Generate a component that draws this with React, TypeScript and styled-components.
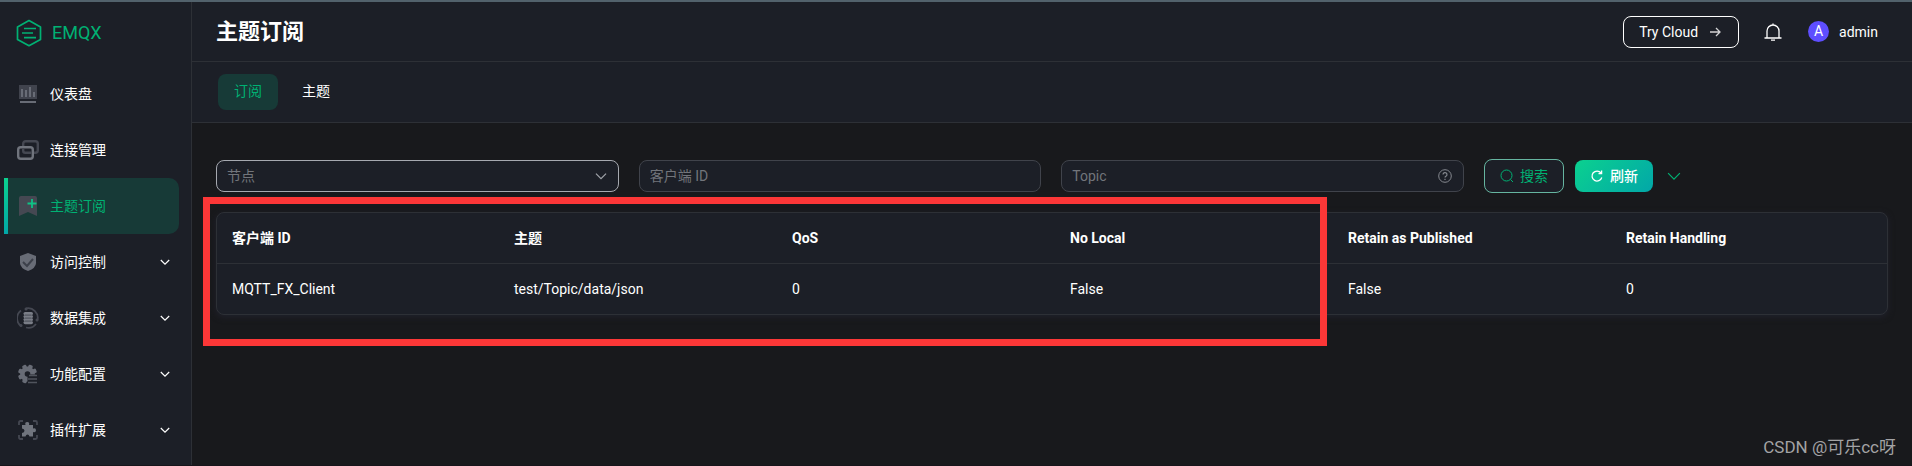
import React from 'react';
import styled, { createGlobalStyle, css } from 'styled-components';

const GlobalStyle = createGlobalStyle`
  *, *::before, *::after { box-sizing: border-box; }
  body {
    margin: 0;
    background: #18191c;
    color: #fff;
    font-family: Roboto, "Noto Sans CJK SC", sans-serif;
    font-size: 14px;
    line-height: 20px;
  }
  button, input, select { font: inherit; color: inherit; margin: 0; }
  a { color: inherit; text-decoration: none; }
`;

const Page = styled.div`
  display: flex;
  position: relative;
  min-height: 100vh;
  border-top: 2px solid #52626c;
  border-bottom: 1px solid #17151b;
`;

const Sidebar = styled.aside`
  flex: 0 0 192px;
  background: #1c1f27;
  border-right: 1px solid #2d3036;
`;

const Brand = styled.a`
  display: flex;
  align-items: center;
  gap: 10px;
  height: 61px;
  padding-left: 16px;
  color: #00b173;
  font-size: 18px;
  font-weight: 400;
`;

const Menu = styled.nav`
  display: flex;
  flex-direction: column;
  padding: 3px 12px 0 4px;
`;

const MenuItem = styled.a<{ $active?: boolean }>`
  display: flex;
  align-items: center;
  gap: 11px;
  height: 56px;
  padding: 0 9px 0 13px;
  border-radius: 0 10px 10px 0;
  ${(p) =>
    p.$active &&
    css`
      color: #00b173;
      background: linear-gradient(#0bd18f, #02a7a8) 0 0 / 4px 100% no-repeat, #173a37;
    `}
`;

const MenuLabel = styled.span`
  flex: 1;
`;

const Main = styled.main`
  flex: 1;
  min-width: 0;
`;

const Header = styled.header`
  display: flex;
  align-items: center;
  height: 60px;
  padding: 0 34px 0 24px;
  background: #1c1f27;
  border-bottom: 1px solid #2d3036;
`;

const Title = styled.h1`
  flex: 1;
  margin: 0;
  font-size: 22px;
  line-height: 32px;
  font-weight: 700;
`;

const CloudButton = styled.button`
  display: flex;
  align-items: center;
  gap: 10px;
  height: 32px;
  padding: 0 16px 0 15px;
  border: 1px solid #fff;
  border-radius: 8px;
  background: transparent;
`;

const IconButton = styled.button`
  display: flex;
  padding: 0;
  margin-left: 24px;
  border: 0;
  background: transparent;
`;

const Account = styled.a`
  display: flex;
  align-items: center;
  gap: 10px;
  margin-left: 25px;
`;

const Avatar = styled.span`
  width: 21px;
  height: 21px;
  border-radius: 50%;
  background: #5e4eff;
  line-height: 21px;
  text-align: center;
`;

const Tabs = styled.nav`
  display: flex;
  align-items: center;
  height: 61px;
  padding: 0 26px;
  gap: 8px;
  background: #1c1f27;
  border-bottom: 1px solid #2d3036;
`;

const Tab = styled.a<{ $active?: boolean }>`
  padding: 7px 16px 9px;
  border-radius: 8px;
  background: ${(p) => (p.$active ? '#173a37' : 'transparent')};
  color: ${(p) => (p.$active ? '#00b173' : '#fff')};
`;

const Content = styled.div`
  padding: 36px 24px;
`;

const Filters = styled.form`
  display: flex;
  align-items: center;
  gap: 20px;
  height: 34px;
  margin-bottom: 19px;
`;

const Field = styled.div<{ $hover?: boolean }>`
  display: flex;
  align-items: center;
  flex: 1;
  min-width: 0;
  height: 32px;
  padding: 0 11px 0 10px;
  border: 1px solid ${(p) => (p.$hover ? '#a6a9b0' : '#40434b')};
  border-radius: 8px;
  background: #1c1f27;
  color: #a1a4aa;
`;

const controlStyle = css`
  flex: 1;
  min-width: 0;
  padding: 0;
  border: 0;
  outline: 0;
  background: transparent;
  color: #72757b;
`;

const TextInput = styled.input`
  ${controlStyle}
  &::placeholder { color: #72757b; opacity: 1; }
`;

const Select = styled.select`
  ${controlStyle}
  appearance: none;
`;

const Actions = styled.div`
  display: flex;
  align-items: center;
  flex: 0 0 404px;
  gap: 11px;
`;

const ActionButton = styled.button<{ $primary?: boolean }>`
  display: flex;
  align-items: center;
  justify-content: center;
  gap: 6px;
  width: ${(p) => (p.$primary ? 78 : 80)}px;
  height: ${(p) => (p.$primary ? 32 : 34)}px;
  padding: 0;
  border: ${(p) => (p.$primary ? '0' : '1px solid #66b5a0')};
  border-radius: 8px;
  background: ${(p) => (p.$primary ? 'linear-gradient(135deg, #0bd18f, #02a7a8)' : '#1c1f27')};
  color: ${(p) => (p.$primary ? '#fff' : '#00b173')};
  font-weight: ${(p) => (p.$primary ? 500 : 400)};
`;

const MoreButton = styled.button`
  display: flex;
  padding: 0;
  margin-left: 3px;
  border: 0;
  background: transparent;
  color: #00b173;
`;

const TableCard = styled.div`
  border: 1px solid #2d3036;
  border-radius: 8px;
  background: #1c1f27;
  box-shadow: 0 2px 6px #20212c;
`;

const Table = styled.table`
  width: 100%;
  table-layout: fixed;
  border-collapse: separate;
  border-spacing: 0;
  text-align: left;

  th, td { padding: 0 15px; }
  th { height: 50px; font-weight: 700; }
  td { height: 51px; border-top: 1px solid #2d3036; }
`;

const Column = styled.col<{ $width?: number }>`
  width: ${(p) => (p.$width ? `${p.$width}px` : 'auto')};
`;

const Highlight = styled.div`
  position: absolute;
  top: 195px;
  left: 203px;
  width: 1124px;
  height: 149px;
  border: 7px solid #fc3737;
  pointer-events: none;
`;

const Watermark = styled.div`
  position: absolute;
  right: 16px;
  bottom: 6px;
  color: #a3a3a5;
  font-size: 17px;
  line-height: 24px;
`;

const Chevron = ({ size = 10 }: { size?: number }) => (
  <svg width={size} height={size} viewBox="0 0 10 10" fill="none" stroke="currentColor" strokeWidth="1.2" aria-hidden="true">
    <path d="M.8 3 5 7.2 9.2 3" vectorEffect="non-scaling-stroke" />
  </svg>
);

const Logo = () => (
  <svg width="26" height="28" viewBox="0 0 26 28" fill="none" stroke="#00b173" aria-hidden="true">
    <path d="M13 1.5 24.5 8v12.4L13 26.7 1.5 20.4V8Z" strokeWidth="1.7" strokeLinejoin="round" />
    <path d="M8 9.5h12M6 14h11M8 18.7h12" strokeWidth="1.7" />
  </svg>
);

const MENU_ICONS: Record<string, React.ReactNode> = {
  dashboard: (
    <>
      <path d="M2 2h18v14H2z" fill="#40434d" />
      <path d="M5 6v8M9 7v7M13 4v10M17 9v5" stroke="#686c76" strokeWidth="2" />
      <path d="M3 18h16v2H3z" fill="#686c76" />
    </>
  ),
  connection: (
    <g fill="none" strokeWidth="2.4">
      <rect x="6.2" y="2.2" width="14.6" height="11.6" rx="2.5" stroke="#454852" />
      <rect x="1.2" y="8.2" width="14.6" height="11.6" rx="2.5" stroke="#70747d" fill="#1c1f27" />
      <path d="M6.2 9.500v2.200q0 2 2 2h6.400" stroke="#454852" />
    </g>
  ),
  subscribe: (
    <>
      <path d="M4 1h14q2 0 2 2v18l-9-4-9 4V3q0-2 2-2Z" fill="#454852" />
      <path d="M15 4v9M10.500 8.500h9" stroke="#0ec285" strokeWidth="1.8" />
    </>
  ),
  access: (
    <>
      <path d="m11 2 8 3v7q0 5-8 8-8-3-8-8V5Z" fill="#686c76" />
      <path d="m6 11 4 4 6-7" fill="none" stroke="#3c404a" strokeWidth="2" />
    </>
  ),
  data: (
    <>
      <g fill="none" stroke="#454852" strokeWidth="1.8">
        <path d="M9 1.500A9.600 9.600 0 0 1 20.500 13M19 17A9.600 9.600 0 0 1 9 20.500M4 19A9.600 9.600 0 0 1 4 3.500" />
      </g>
      <circle cx="9" cy="2" r="1.500" fill="#454852" />
      <circle cx="20" cy="13" r="1.500" fill="#454852" />
      <circle cx="4" cy="18.500" r="1.500" fill="#454852" />
      <g fill="#7a7e87">
        <rect x="6.500" y="5" width="9.500" height="3.200" rx="1.600" />
        <rect x="6.500" y="8" width="9.500" height="3.200" rx="1.600" />
        <rect x="6.500" y="11" width="9.500" height="3.200" rx="1.600" />
        <rect x="6.500" y="14" width="9.500" height="3.200" rx="1.600" />
      </g>
      <path d="M8 8.100h6.500M8 11.100h6.500M8 14.100h6.500" stroke="#3c404a" strokeWidth=".8" />
    </>
  ),
  settings: (
    <>
      <g fill="#686c76">
        <circle cx="10.500" cy="11" r="7.400" />
        {[22, 67, 112, 157].map((angle) => (
          <rect key={angle} x="8.300" y="1.500" width="4.400" height="19" rx="1.200" transform={`rotate(${angle} 10.500 11)`} />
        ))}
      </g>
      <circle cx="10.500" cy="11" r="2.800" fill="#1c1f27" />
      <path d="M10.500 11.500H22V22H10.500z" fill="#1c1f27" />
      <path d="M12 12.500h8M11 16h9M11 19.500h9" stroke="#50545d" strokeWidth="1.400" />
    </>
  ),
  plugin: (
    <>
      <path
        d="M2 6V3.500Q2 2 3.500 2H6M16 2h2.500Q20 2 20 3.500V6M20 16v2.500q0 1.500-1.500 1.500H16M6 20H3.500Q2 20 2 18.500V16"
        fill="none"
        stroke="#454852"
        strokeWidth="1.800"
      />
      <path
        fill="#70747d"
        d="M5 6h3.500q-1-3 1.700-3t1.800 3H16v3.500q3-1 3 1.700T16 13v4.500h-3.500q-.5-2-2-2t-2 2H5V14q2.500-.5 2.500-2.200T5 9.500Z"
      />
    </>
  ),
};

const MENU = [
  { icon: 'dashboard', label: '仪表盘' },
  { icon: 'connection', label: '连接管理' },
  { icon: 'subscribe', label: '主题订阅', active: true },
  { icon: 'access', label: '访问控制', expandable: true },
  { icon: 'data', label: '数据集成', expandable: true },
  { icon: 'settings', label: '功能配置', expandable: true },
  { icon: 'plugin', label: '插件扩展', expandable: true },
];

const COLUMNS = [
  { label: '客户端 ID', width: 282 },
  { label: '主题' },
  { label: 'QoS' },
  { label: 'No Local' },
  { label: 'Retain as Published' },
  { label: 'Retain Handling', width: 276 },
];
const ROWS = [['MQTT_FX_Client', 'test/Topic/data/json', '0', 'False', 'False', '0']];

export default function App() {
  return (
    <>
      <GlobalStyle />
      <Page>
        <Sidebar>
          <Brand href="#">
            <Logo />
            EMQX
          </Brand>
          <Menu>
            {MENU.map((item) => (
              <MenuItem key={item.icon} href="#" $active={item.active}>
                <svg width="22" height="22" viewBox="0 0 22 22" aria-hidden="true">
                  {MENU_ICONS[item.icon]}
                </svg>
                <MenuLabel>{item.label}</MenuLabel>
                {item.expandable && <Chevron />}
              </MenuItem>
            ))}
          </Menu>
        </Sidebar>
        <Main>
          <Header>
            <Title>主题订阅</Title>
            <CloudButton type="button">
              Try Cloud
              <svg width="14" height="14" viewBox="0 0 14 14" fill="none" stroke="#d2d2d4" strokeWidth="1.300" aria-hidden="true">
                <path d="M2 7h10M8 3l4 4-4 4" />
              </svg>
            </CloudButton>
            <IconButton type="button" aria-label="Notifications">
              <svg width="20" height="20" viewBox="0 0 20 20" fill="none" stroke="#fff" strokeWidth="1.300" aria-hidden="true">
                <path d="M4 16V9a6 6 0 0 1 12 0v7M1.500 16h17M10 1.500V3M8 18.200h4" />
              </svg>
            </IconButton>
            <Account href="#">
              <Avatar>A</Avatar>
              admin
            </Account>
          </Header>
          <Tabs>
            <Tab href="#" $active>订阅</Tab>
            <Tab href="#">主题</Tab>
          </Tabs>
          <Content>
            <Filters>
              <Field $hover>
                <Select aria-label="节点" defaultValue="">
                  <option value="">节点</option>
                </Select>
                <Chevron size={12} />
              </Field>
              <Field>
                <TextInput aria-label="客户端 ID" placeholder="客户端 ID" />
              </Field>
              <Field>
                <TextInput aria-label="Topic" placeholder="Topic" />
                <svg width="14" height="14" viewBox="0 0 14 14" fill="none" stroke="#85888f" aria-hidden="true">
                  <circle cx="7" cy="7" r="6.300" />
                  <path d="M5 5.600a2 2 0 1 1 2.800 1.800Q7 7.700 7 8.600M7 9.800v1.200" strokeWidth="1.200" />
                </svg>
              </Field>
              <Actions>
                <ActionButton type="button">
                  <svg width="14" height="14" viewBox="0 0 14 14" fill="none" stroke="currentColor" aria-hidden="true">
                    <circle cx="6.500" cy="6.500" r="5.500" />
                    <path d="m10.500 10.500 2.500 2.500" />
                  </svg>
                  搜索
                </ActionButton>
                <ActionButton type="button" $primary>
                  <svg width="14" height="14" viewBox="0 0 14 14" fill="none" stroke="currentColor" strokeWidth="1.300" aria-hidden="true">
                    <path d="M11.800 8.500A5 5 0 1 1 11 4M11.600 1.500v3.100H8.500" />
                  </svg>
                  刷新
                </ActionButton>
                <MoreButton type="button" aria-label="More filters">
                  <Chevron size={14} />
                </MoreButton>
              </Actions>
            </Filters>
            <TableCard>
              <Table>
                <colgroup>
                  {COLUMNS.map((c) => <Column key={c.label} $width={c.width} />)}
                </colgroup>
                <thead>
                  <tr>{COLUMNS.map((c) => <th key={c.label} scope="col">{c.label}</th>)}</tr>
                </thead>
                <tbody>
                  {ROWS.map((row) => (
                    <tr key={row[0]}>{row.map((cell, i) => <td key={COLUMNS[i].label}>{cell}</td>)}</tr>
                  ))}
                </tbody>
              </Table>
            </TableCard>
          </Content>
        </Main>
        <Highlight />
        <Watermark>CSDN @可乐cc呀</Watermark>
      </Page>
    </>
  );
}
